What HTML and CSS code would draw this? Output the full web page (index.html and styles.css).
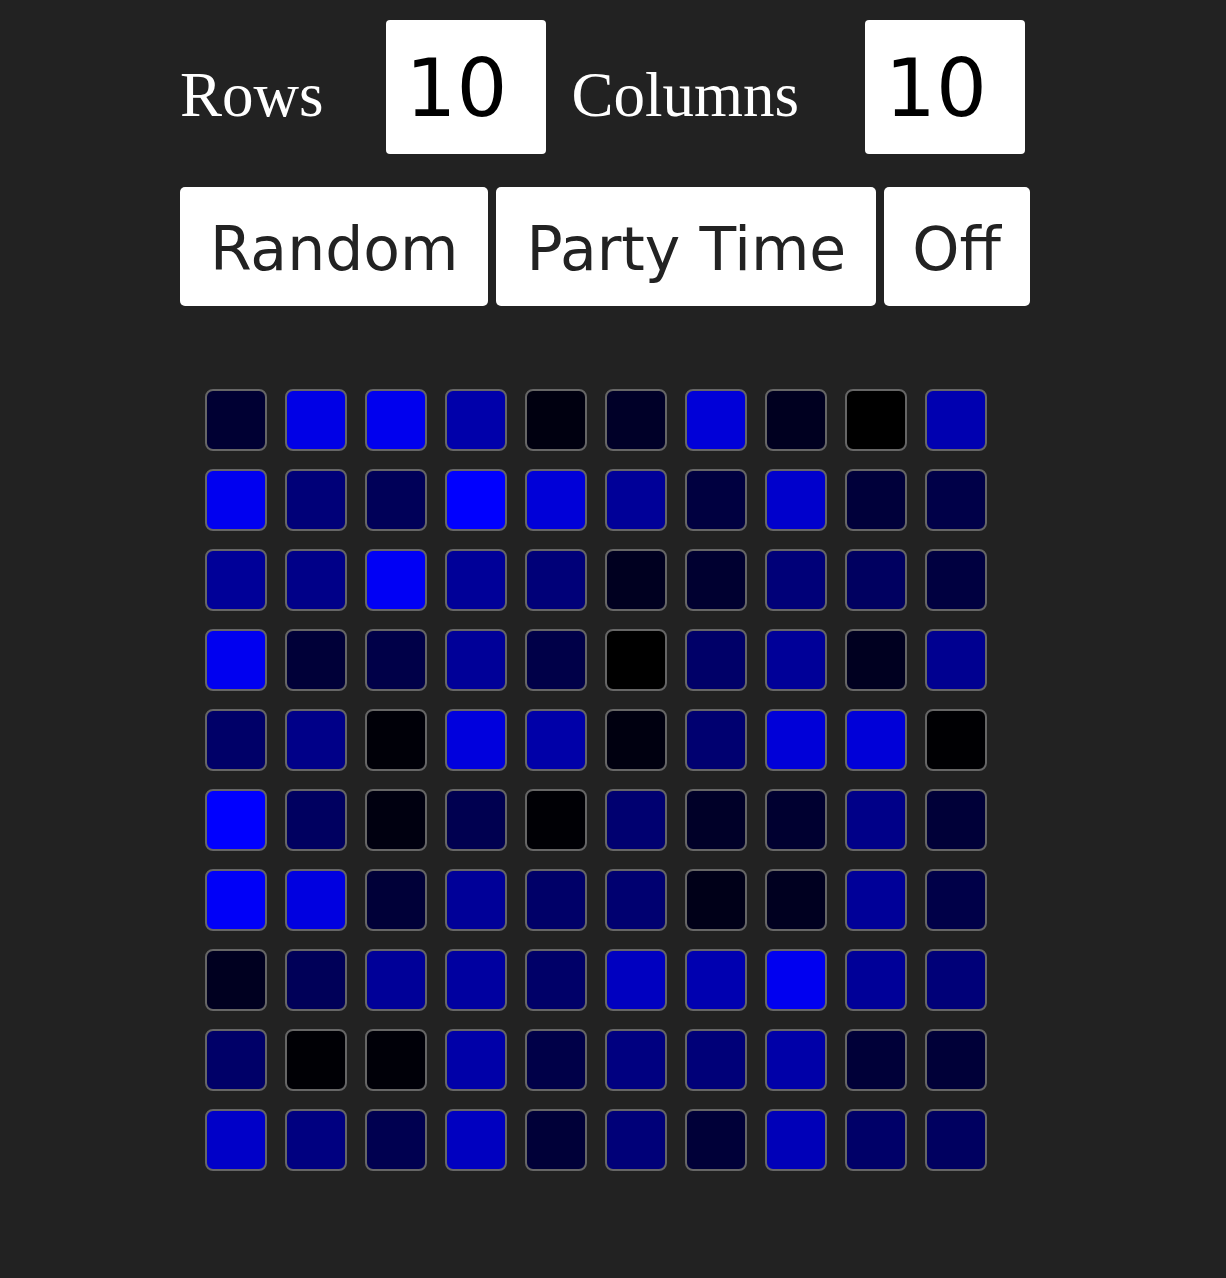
FILE: index.html
```html
<!DOCTYPE html>
<html lang="en">
<head>
<meta charset="utf-8">
<title>Grid</title>
<link rel="stylesheet" href="styles.css">
</head>
<body>
<div class="app">
  <div class="dims">
    <label class="dim-label">Rows</label>
    <input class="dim-input" type="text" value="10">
    <label class="dim-label dim-label--cols">Columns</label>
    <input class="dim-input" type="text" value="10">
  </div>
  <div class="actions">
    <button class="btn">Random</button>
    <button class="btn">Party Time</button>
    <button class="btn">Off</button>
  </div>
  <div class="board">
    <div class="cell" style="background-color:#000033"></div>
    <div class="cell" style="background-color:#0000e6"></div>
    <div class="cell" style="background-color:#0000ee"></div>
    <div class="cell" style="background-color:#0000aa"></div>
    <div class="cell" style="background-color:#000010"></div>
    <div class="cell" style="background-color:#000028"></div>
    <div class="cell" style="background-color:#0000d8"></div>
    <div class="cell" style="background-color:#000020"></div>
    <div class="cell" style="background-color:#000000"></div>
    <div class="cell" style="background-color:#0000b0"></div>

    <div class="cell" style="background-color:#0000f0"></div>
    <div class="cell" style="background-color:#000078"></div>
    <div class="cell" style="background-color:#000058"></div>
    <div class="cell" style="background-color:#0000ff"></div>
    <div class="cell" style="background-color:#0000d8"></div>
    <div class="cell" style="background-color:#000098"></div>
    <div class="cell" style="background-color:#000040"></div>
    <div class="cell" style="background-color:#0000cc"></div>
    <div class="cell" style="background-color:#00003a"></div>
    <div class="cell" style="background-color:#000048"></div>

    <div class="cell" style="background-color:#000098"></div>
    <div class="cell" style="background-color:#000088"></div>
    <div class="cell" style="background-color:#0000f5"></div>
    <div class="cell" style="background-color:#000098"></div>
    <div class="cell" style="background-color:#000078"></div>
    <div class="cell" style="background-color:#000020"></div>
    <div class="cell" style="background-color:#000030"></div>
    <div class="cell" style="background-color:#000078"></div>
    <div class="cell" style="background-color:#000060"></div>
    <div class="cell" style="background-color:#000040"></div>

    <div class="cell" style="background-color:#0000f0"></div>
    <div class="cell" style="background-color:#000038"></div>
    <div class="cell" style="background-color:#000048"></div>
    <div class="cell" style="background-color:#000098"></div>
    <div class="cell" style="background-color:#000048"></div>
    <div class="cell" style="background-color:#000000"></div>
    <div class="cell" style="background-color:#000068"></div>
    <div class="cell" style="background-color:#000098"></div>
    <div class="cell" style="background-color:#000020"></div>
    <div class="cell" style="background-color:#000090"></div>

    <div class="cell" style="background-color:#000068"></div>
    <div class="cell" style="background-color:#000088"></div>
    <div class="cell" style="background-color:#000008"></div>
    <div class="cell" style="background-color:#0000dd"></div>
    <div class="cell" style="background-color:#0000a8"></div>
    <div class="cell" style="background-color:#000010"></div>
    <div class="cell" style="background-color:#000070"></div>
    <div class="cell" style="background-color:#0000d8"></div>
    <div class="cell" style="background-color:#0000d8"></div>
    <div class="cell" style="background-color:#000003"></div>

    <div class="cell" style="background-color:#0000ff"></div>
    <div class="cell" style="background-color:#000060"></div>
    <div class="cell" style="background-color:#000010"></div>
    <div class="cell" style="background-color:#000050"></div>
    <div class="cell" style="background-color:#000005"></div>
    <div class="cell" style="background-color:#000070"></div>
    <div class="cell" style="background-color:#000028"></div>
    <div class="cell" style="background-color:#000030"></div>
    <div class="cell" style="background-color:#000088"></div>
    <div class="cell" style="background-color:#000038"></div>

    <div class="cell" style="background-color:#0000f8"></div>
    <div class="cell" style="background-color:#0000e0"></div>
    <div class="cell" style="background-color:#000038"></div>
    <div class="cell" style="background-color:#000098"></div>
    <div class="cell" style="background-color:#000068"></div>
    <div class="cell" style="background-color:#000070"></div>
    <div class="cell" style="background-color:#000018"></div>
    <div class="cell" style="background-color:#000020"></div>
    <div class="cell" style="background-color:#000098"></div>
    <div class="cell" style="background-color:#000048"></div>

    <div class="cell" style="background-color:#000020"></div>
    <div class="cell" style="background-color:#000058"></div>
    <div class="cell" style="background-color:#000098"></div>
    <div class="cell" style="background-color:#0000a0"></div>
    <div class="cell" style="background-color:#000068"></div>
    <div class="cell" style="background-color:#0000c0"></div>
    <div class="cell" style="background-color:#0000b0"></div>
    <div class="cell" style="background-color:#0000f0"></div>
    <div class="cell" style="background-color:#000098"></div>
    <div class="cell" style="background-color:#000078"></div>

    <div class="cell" style="background-color:#000068"></div>
    <div class="cell" style="background-color:#000005"></div>
    <div class="cell" style="background-color:#000008"></div>
    <div class="cell" style="background-color:#0000a8"></div>
    <div class="cell" style="background-color:#000048"></div>
    <div class="cell" style="background-color:#000080"></div>
    <div class="cell" style="background-color:#000078"></div>
    <div class="cell" style="background-color:#0000a8"></div>
    <div class="cell" style="background-color:#000038"></div>
    <div class="cell" style="background-color:#000038"></div>

    <div class="cell" style="background-color:#0000c8"></div>
    <div class="cell" style="background-color:#000080"></div>
    <div class="cell" style="background-color:#000050"></div>
    <div class="cell" style="background-color:#0000c0"></div>
    <div class="cell" style="background-color:#000038"></div>
    <div class="cell" style="background-color:#000078"></div>
    <div class="cell" style="background-color:#000038"></div>
    <div class="cell" style="background-color:#0000b8"></div>
    <div class="cell" style="background-color:#000068"></div>
    <div class="cell" style="background-color:#000060"></div>
  </div>
</div>
</body>
</html>
```
FILE: styles.css
```css
html, body {
  background: #222222;
}

body {
  margin: 8px;
  font-family: "Liberation Serif", "Times New Roman", serif;
}

.app {
  padding: 12px 0 0 172px;
}

.dims {
  display: flex;
  align-items: baseline;
}

.dim-label {
  color: #ffffff;
  font-family: "Liberation Serif", "Times New Roman", serif;
  font-size: 63px;
  margin-right: 62px;
}

.dim-label--cols {
  margin-left: 26px;
  margin-right: 66px;
}

.dim-input {
  box-sizing: border-box;
  width: 160px;
  height: 134px;
  margin: 0;
  padding: 2px 20px 0;
  border: none;
  border-radius: 4px;
  background: #ffffff;
  color: #000000;
  font-family: "DejaVu Sans", Verdana, sans-serif;
  font-size: 80px;
  outline: none;
}

.actions {
  display: flex;
  gap: 8px;
  margin-top: 33px;
}

.btn {
  margin: 0;
  padding: 27px 30px 22px;
  border: none;
  border-radius: 5px;
  background: #ffffff;
  color: #222222;
  font-family: "DejaVu Sans", Verdana, sans-serif;
  font-size: 60px;
  line-height: normal;
  cursor: pointer;
}

.btn:last-child {
  padding-left: 28px;
  padding-right: 29px;
}

.board {
  display: grid;
  grid-template-columns: repeat(10, 62px);
  grid-auto-rows: 62px;
  gap: 18px;
  margin: 83px 0 0 25px;
}

.cell {
  box-sizing: border-box;
  border: 2px solid #666666;
  border-radius: 8px;
}
```
